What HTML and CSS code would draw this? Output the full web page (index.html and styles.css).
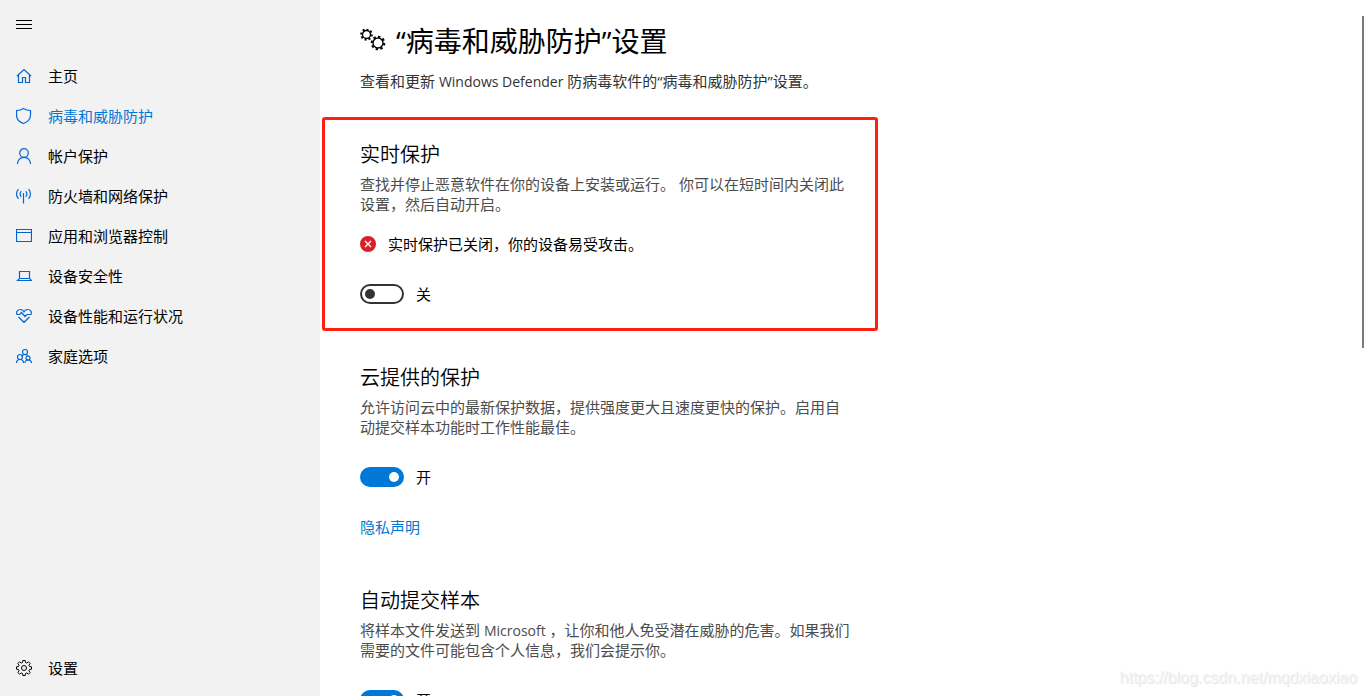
FILE: index.html
```html
<!DOCTYPE html>
<html lang="zh-CN">
<head>
    <meta charset="UTF-8">
    <meta name="viewport" content="width=device-width, initial-scale=1.0">
    <title>“病毒和威胁防护”设置</title>
    <link rel="stylesheet" href="styles.css">
</head>
<body>
    <!-- 侧边栏 -->
    <aside class="sidebar">
        <button type="button" class="menu-button" aria-label="菜单">
            <svg class="icon" viewBox="0 0 16 16" shape-rendering="crispEdges"><path d="M0 4.5h16M0 8.5h16M0 12.5h16"/></svg>
        </button>
        <nav class="nav">
            <a class="nav-item" href="#">
                <svg class="icon" viewBox="0 0 16 16"><path d="M1 8 8 1.500 15 8M2.500 7v7.500h4v-5h3v5h4V7"/></svg>
                主页
            </a>
            <a class="nav-item active" href="#">
                <svg class="icon" viewBox="0 0 16 16"><path d="M7.500 .5C5.500 2 3.200 2.500 .5 2.500V7c0 4 2.500 6.800 7 8.500 4.500-1.700 7-4.500 7-8.500V2.500C11.800 2.500 9.500 2 7.500 .5z"/></svg>
                病毒和威胁防护
            </a>
            <a class="nav-item" href="#">
                <svg class="icon" viewBox="0 0 16 16"><circle cx="8" cy="5" r="4.300"/><path d="M1.500 16c0-4 2.800-6.700 6.500-6.700s6.500 2.700 6.500 6.700"/></svg>
                帐户保护
            </a>
            <a class="nav-item" href="#">
                <svg class="icon" viewBox="0 0 16 16"><path d="M7.500 5v10.500M5.300 3.200c-1.600 1.500-1.600 4.100 0 5.600M9.700 3.200c1.600 1.500 1.600 4.100 0 5.600M2.500 1.200c-2.600 2.600-2.600 7 0 9.600M12.500 1.200c2.600 2.600 2.600 7 0 9.600"/></svg>
                防火墙和网络保护
            </a>
            <a class="nav-item" href="#">
                <svg class="icon" viewBox="0 0 16 16"><path d="M.5 1.500h15v12H.5zM.5 4.500h15"/></svg>
                应用和浏览器控制
            </a>
            <a class="nav-item" href="#">
                <svg class="icon" viewBox="0 0 16 16"><path d="M3.500 10.500v-7h10v7M3.500 10.500h10l2 2h-14z"/></svg>
                设备安全性
            </a>
            <a class="nav-item" href="#">
                <svg class="icon" viewBox="0 0 16 16"><path d="M1 6.500C-.3 3.500 2 1.500 4.200 1.500 6 1.500 7.300 2.500 8 3.700c.7-1.200 2-2.200 3.800-2.200 2.200 0 4.500 2 3.200 5M.5 6.500h3.200l1.800-2 3.500 4 2-2h4.500M2.500 9 8 14.300 13.500 9"/></svg>
                设备性能和运行状况
            </a>
            <a class="nav-item" href="#">
                <svg class="icon" viewBox="0 0 16 16"><circle cx="9" cy="4" r="2.500"/><path d="M5.500 8.500C6.300 7.200 7.500 6.500 9 6.500s2.800.8 3.500 2"/><circle cx="4" cy="9" r="2.500"/><path d="M.5 15c0-2.200 1.500-3.500 3.500-3.500S7.500 12.800 7.500 15"/><circle cx="12" cy="10" r="2"/><path d="M9 15c0-1.900 1.300-3 3.200-3s3.200 1.100 3.300 3"/></svg>
                家庭选项
            </a>
        </nav>
        <a class="nav-item settings" href="#">
            <svg class="icon" viewBox="0 0 16 16"><path d="M6.800 .5h2.400l.3 2 1.300.6 1.700-1.300 1.700 1.700-1.300 1.700.6 1.300 2 .3v2.400l-2 .3-.6 1.300 1.300 1.700-1.700 1.700-1.700-1.300-1.300.6-.3 2H6.800l-.3-2-1.300-.6-1.700 1.300-1.700-1.700 1.300-1.700-.6-1.300-2-.3V6.800l2-.3.6-1.300-1.300-1.700 1.700-1.700 1.700 1.300 1.300-.6z"/><circle cx="8" cy="8" r="2.500"/></svg>
            设置
        </a>
    </aside>

    <!-- 设置内容 -->
    <main class="content">
        <h1 class="page-title">
            <svg class="gears" viewBox="0 0 26 24">
                <g><circle cx="6.500" cy="5.500" r="4"/><circle class="teeth" cx="6.500" cy="5.500" r="5.300" pathLength="16"/></g>
                <g><circle cx="18" cy="14" r="5"/><circle class="teeth" cx="18" cy="14" r="6.300" pathLength="16"/></g>
            </svg>
            <span>“病毒和威胁防护”设置</span>
        </h1>
        <p class="subtitle">查看和更新 <span class="latin">Windows Defender</span> 防病毒软件的“病毒和威胁防护”设置。</p>

        <section class="section highlighted">
            <h2 class="section-title">实时保护</h2>
            <p class="description">查找并停止恶意软件在你的设备上安装或运行。 你可以在短时间内关闭此设置，然后自动开启。</p>
            <p class="status">
                <svg class="error-icon" viewBox="0 0 16 16"><circle cx="8" cy="8" r="8"/><path d="M5 5l6 6M11 5l-6 6"/></svg>
                实时保护已关闭，你的设备易受攻击。
            </p>
            <label class="switch"><input type="checkbox" class="toggle">关</label>
        </section>

        <section class="section">
            <h2 class="section-title">云提供的保护</h2>
            <p class="description">允许访问云中的最新保护数据，提供强度更大且速度更快的保护。启用自动提交样本功能时工作性能最佳。</p>
            <label class="switch"><input type="checkbox" class="toggle" checked>开</label>
            <a class="link" href="#">隐私声明</a>
        </section>

        <section class="section">
            <h2 class="section-title">自动提交样本</h2>
            <p class="description">将样本文件发送到 <span class="latin">Microsoft</span> ，让你和他人免受潜在威胁的危害。如果我们需要的文件可能包含个人信息，我们会提示你。</p>
            <label class="switch"><input type="checkbox" class="toggle" checked>开</label>
        </section>
    </main>

    <div class="scrollbar"></div>
    <div class="watermark">https://blog.csdn.net/mqdxiaoxiao</div>
</body>
</html>
```

FILE: styles.css
```css
* {
    box-sizing: border-box;
}
body {
    position: relative;
    display: flex;
    height: 100vh;
    margin: 0;
    overflow: hidden;
    font-family: "Open Sans", "Noto Sans CJK SC", sans-serif;
    font-size: 15px;
    line-height: 20px;
    color: #000;
    background: #fff;
}
h1, h2, p {
    margin: 0;
    font-weight: 400;
}

/* 侧边栏 */
.sidebar {
    display: flex;
    flex-direction: column;
    flex: none;
    width: 320px;
    padding-bottom: 8px;
    background: #f2f2f2;
}
.menu-button {
    display: flex;
    align-items: center;
    width: 48px;
    height: 48px;
    padding: 0 16px;
    border: none;
    background: none;
    color: #000;
}
.nav {
    flex: 1;
    padding-top: 8px;
}
.nav-item {
    display: flex;
    align-items: center;
    gap: 16px;
    height: 40px;
    padding: 0 16px;
    color: #000;
    text-decoration: none;
}
.nav-item.active {
    color: #0078d7;
}
.icon {
    flex: none;
    width: 16px;
    height: 16px;
    fill: none;
    stroke: currentColor;
    stroke-width: 1;
}
.nav .icon {
    stroke: #0067d2;
    stroke-width: 1.2;
}

/* 设置内容 */
.content {
    flex: 1;
    padding: 21px 40px 0;
    overflow: hidden;
}
.page-title {
    display: flex;
    align-items: center;
    gap: 10px;
    font-size: 28px;
    line-height: 40px;
}
.gears {
    flex: none;
    width: 26px;
    height: 24px;
    fill: none;
    stroke: #000;
    stroke-width: 1.4;
}
.gears .teeth {
    stroke-width: 2;
    stroke-dasharray: 1 1;
}
.subtitle {
    margin: 10px 0 50px;
    color: #333;
}
.latin {
    font-size: 14px;
    line-height: 1;
}
.section {
    position: relative;
    max-width: 494px;
    margin-bottom: 50px;
}
.section-title {
    margin-bottom: 5px;
    font-size: 20px;
    font-weight: 350;
    line-height: 28px;
}
.description {
    color: #4c4c4c;
}
.status {
    display: flex;
    align-items: center;
    gap: 12px;
    margin-top: 20px;
}
.error-icon {
    width: 16px;
    height: 16px;
    fill: #da1f28;
    stroke: #fff;
    stroke-width: 1.4;
}
.error-icon circle {
    stroke: none;
}
.switch {
    display: flex;
    align-items: center;
    gap: 12px;
    margin-top: 30px;
}
.toggle {
    display: flex;
    align-items: center;
    appearance: none;
    width: 44px;
    height: 20px;
    margin: 0;
    padding: 0 3px;
    border: 2px solid #333;
    border-radius: 10px;
    background: #fff;
}
.toggle::before {
    content: "";
    width: 10px;
    height: 10px;
    border-radius: 50%;
    background: #333;
}
.toggle:checked {
    justify-content: flex-end;
    border-color: #0078d7;
    background: #0078d7;
}
.toggle:checked::before {
    background: #fff;
}
.link {
    display: block;
    margin-top: 30px;
    color: #0078d7;
    text-decoration: none;
}

/* 红色标注框 */
.highlighted {
    margin-bottom: 60px;
}
.highlighted::after {
    content: "";
    position: absolute;
    inset: -24px -24px -27px -38px;
    border: 3px solid #ff1e12;
    border-radius: 3px;
    pointer-events: none;
}

.scrollbar {
    position: absolute;
    top: 16px;
    right: 2px;
    width: 2px;
    height: 332px;
    background: #7a7a7a;
}
.watermark {
    position: absolute;
    right: 9px;
    bottom: 8px;
    font-family: "Liberation Sans", Arial, sans-serif;
    font-size: 16px;
    color: #f4f4f4;
    text-shadow: 1px 1px 1px #e2e2e2;
}
```
